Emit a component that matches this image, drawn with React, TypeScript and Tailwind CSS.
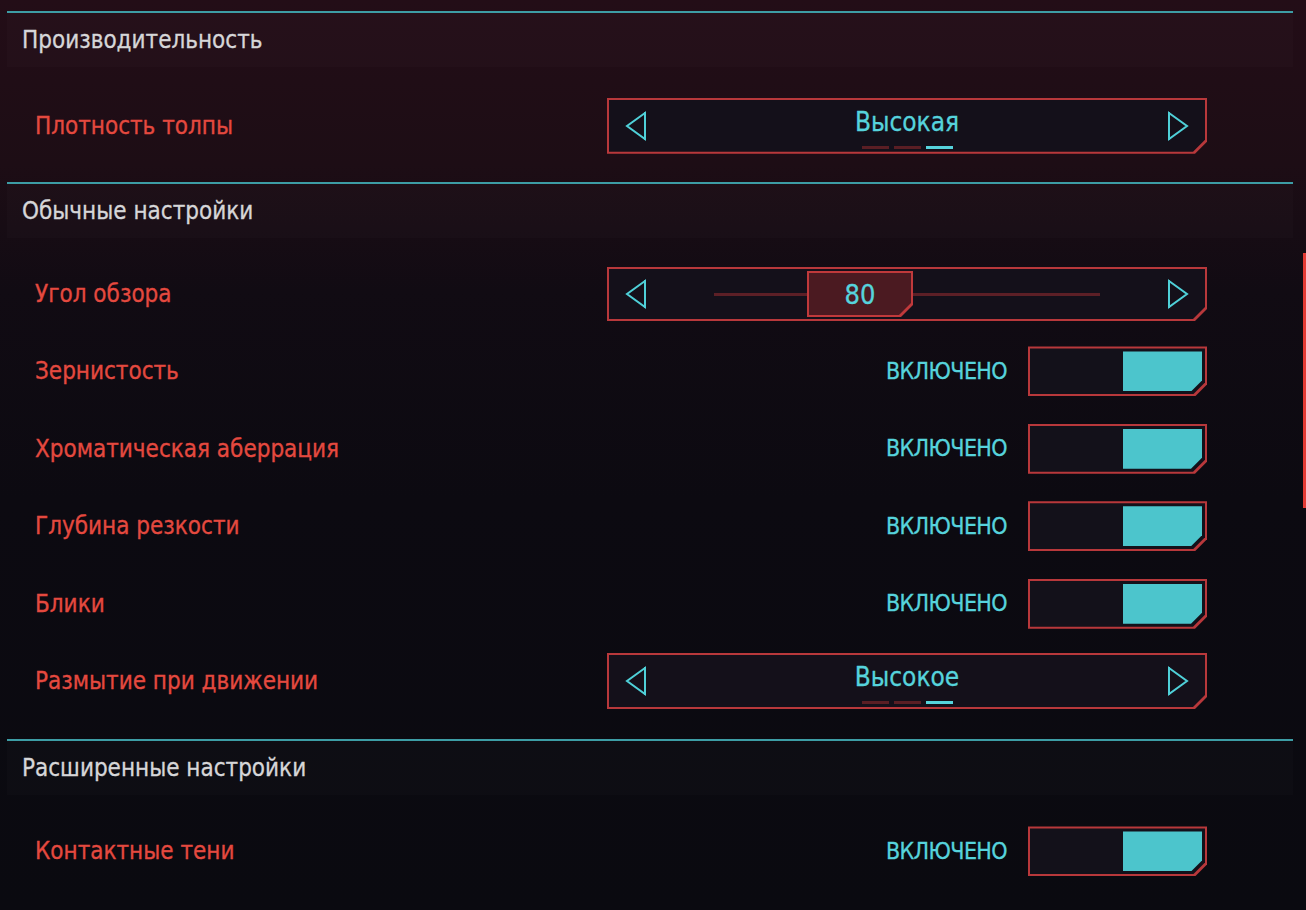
import React from "react";

const CUT =
  "[clip-path:polygon(0_0,100%_0,100%_calc(100%_-_12px),calc(100%_-_12px)_100%,0_100%)]";
const CUT_SM =
  "[clip-path:polygon(0_0,100%_0,100%_calc(100%_-_11px),calc(100%_-_11px)_100%,0_100%)]";

function Arrow({ dir }: { dir: "left" | "right" }) {
  return (
    <svg width="24" height="30" viewBox="0 0 24 30" fill="none" stroke="#4fd0d8" strokeWidth="2">
      {dir === "left" ? (
        <path d="M21 2 L3 15 L21 28 Z M21 1 V29" />
      ) : (
        <path d="M3 2 L21 15 L3 28 Z M3 1 V29" />
      )}
    </svg>
  );
}

function Selector({ value }: { value: string }) {
  return (
    <div className={`h-[56px] w-[600px] bg-[#b8383b] p-[2px] ${CUT}`}>
      <div className={`flex h-full items-center justify-between bg-[#14101a] px-[15px] ${CUT}`}>
        <Arrow dir="left" />
        <div className="flex flex-col items-center pt-[6px]">
          <span className="text-[26px] leading-none text-[#56d3dc] [-webkit-text-stroke:0.3px_#56d3dc]">
            {value}
          </span>
          <div className="mt-[11px] flex gap-[5px]">
            <div className="h-[3px] w-[27px] bg-[#5a1e24]" />
            <div className="h-[3px] w-[27px] bg-[#5a1e24]" />
            <div className="h-[3px] w-[27px] bg-[#56d3dc]" />
          </div>
        </div>
        <Arrow dir="right" />
      </div>
    </div>
  );
}

function Slider({ value }: { value: number }) {
  return (
    <div className={`h-[54px] w-[600px] bg-[#b8383b] p-[2px] ${CUT}`}>
      <div className={`flex h-full items-center bg-[#14101a] px-[15px] ${CUT}`}>
        <Arrow dir="left" />
        <div className="relative mx-[66px] flex h-full flex-1 items-center">
          <div className="h-[3px] w-full bg-[#5c1f26]" />
          {/* ползунок */}
          <div className={`absolute left-[93px] top-1/2 h-[46px] w-[106px] -translate-y-1/2 bg-[#c0393b] p-[2px] ${CUT}`}>
            <div className={`flex h-full items-center justify-center bg-[#4b1a21] ${CUT}`}>
              <span className="text-[27px] leading-none text-[#56d3dc] [-webkit-text-stroke:0.3px_#56d3dc]">
                {value}
              </span>
            </div>
          </div>
        </div>
        <Arrow dir="right" />
      </div>
    </div>
  );
}

function Toggle() {
  return (
    <div className="flex items-center gap-[21px]">
      <span className="text-[23px] leading-none tracking-[-0.6px] text-[#56d3dc] [-webkit-text-stroke:0.3px_#56d3dc]">
        ВКЛЮЧЕНО
      </span>
      <div className={`h-[50px] w-[179px] bg-[#b8383b] p-[2px] ${CUT}`}>
        <div className={`flex h-full justify-end bg-[#13111a] p-[3px] ${CUT}`}>
          <div className={`h-full w-[79px] bg-[#4cc5cc] ${CUT_SM}`} />
        </div>
      </div>
    </div>
  );
}

function Row({ label, children }: { label: string; children: React.ReactNode }) {
  return (
    <div className="flex h-[77.4px] items-center justify-between pl-[28px] pr-[86px]">
      <span className="text-[24px] leading-none text-[#e4493f] [-webkit-text-stroke:0.3px_#e4493f]">
        {label}
      </span>
      {children}
    </div>
  );
}

function Section({
  title,
  pt,
  pb,
  children,
}: {
  title: string;
  pt: string;
  pb: string;
  children: React.ReactNode;
}) {
  return (
    <section className="border-t-2 border-[#3d9da5]">
      <div className="flex h-[54px] items-center bg-white/[0.015] pl-[15px]">
        <h2 className="text-[24px] font-normal leading-none text-[#d6d6d8] [-webkit-text-stroke:0.3px_#d6d6d8]">
          {title}
        </h2>
      </div>
      <div className={`${pt} ${pb}`}>{children}</div>
    </section>
  );
}

export default function App() {
  return (
    <div className="relative h-[910px] w-[1306px] overflow-hidden bg-[linear-gradient(180deg,#230d17_0%,#1d0d15_18%,#110b13_32%,#0c0a11_55%,#0a0a10_100%)] pl-[7px] pr-[13px] pt-[11px] [font-family:'DejaVu_Sans_Condensed','DejaVu_Sans',sans-serif] [font-stretch:condensed]">
      <Section title="Производительность" pt="pt-[20px]" pb="pb-[18px]">
        <Row label="Плотность толпы">
          <Selector value="Высокая" />
        </Row>
      </Section>

      <Section title="Обычные настройки" pt="pt-[17px]" pb="pb-[19px]">
        <Row label="Угол обзора">
          <Slider value={80} />
        </Row>
        <Row label="Зернистость">
          <Toggle />
        </Row>
        <Row label="Хроматическая аберрация">
          <Toggle />
        </Row>
        <Row label="Глубина резкости">
          <Toggle />
        </Row>
        <Row label="Блики">
          <Toggle />
        </Row>
        <Row label="Размытие при движении">
          <Selector value="Высокое" />
        </Row>
      </Section>

      <Section title="Расширенные настройки" pt="pt-[18px]" pb="pb-[18px]">
        <Row label="Контактные тени">
          <Toggle />
        </Row>
      </Section>

      {/* полоса прокрутки */}
      <div className="absolute right-0 top-[253px] h-[255px] w-[3px] bg-[#e43b35]" />
    </div>
  );
}
